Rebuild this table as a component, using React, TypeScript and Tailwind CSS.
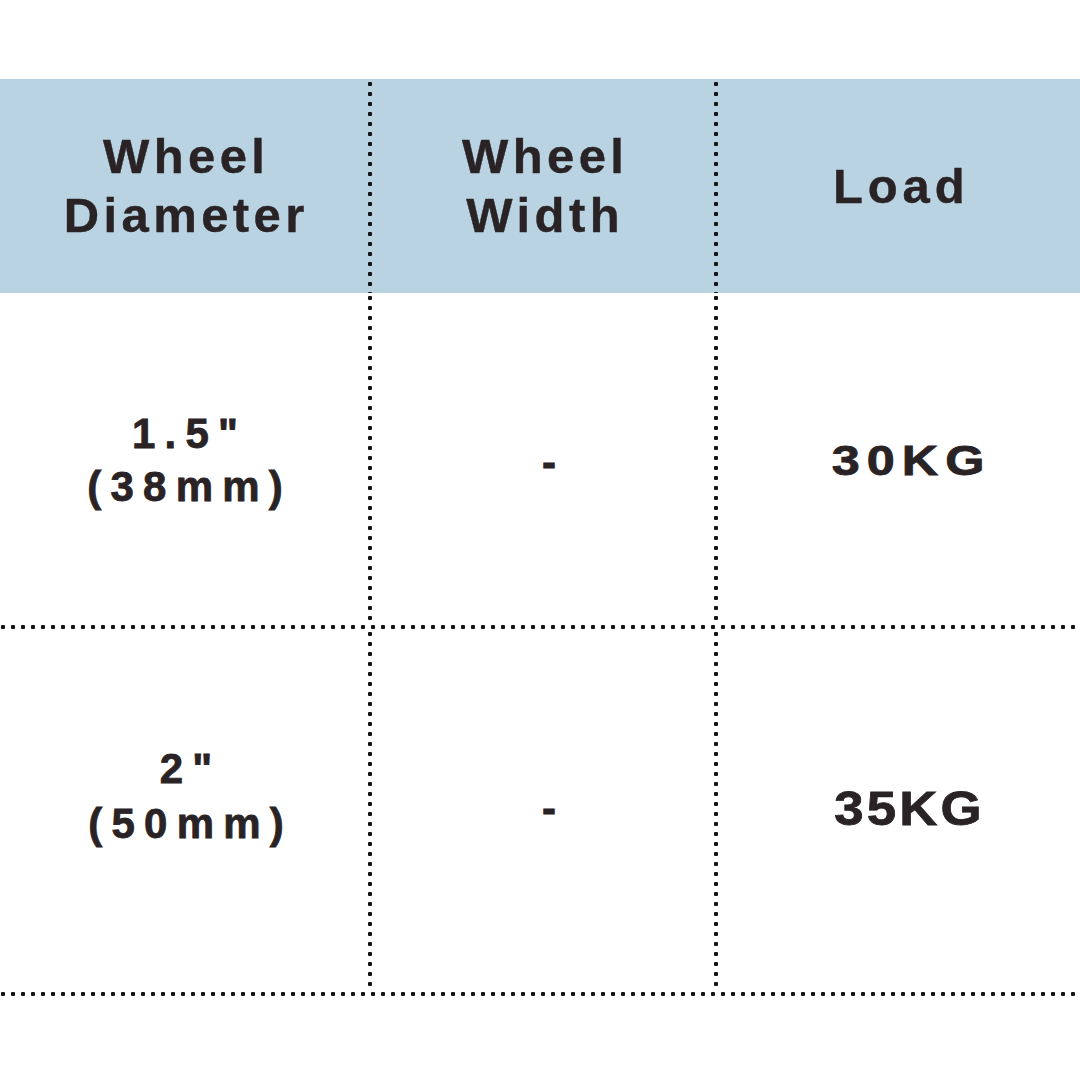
import React from 'react';

const font = { fontFamily: '"Liberation Sans", Arial, sans-serif' };

// dotted divider pieces
function VDots() {
  return <div className="w-[4px] shrink-0 self-stretch bg-[radial-gradient(circle,#141414_2px,transparent_2.5px)] bg-[length:4px_10px]" />;
}

function HDots() {
  return <div className="h-[4px] w-full bg-[radial-gradient(circle,#141414_2px,transparent_2.5px)] bg-[length:10px_4px] bg-[position:-2px_0]" />;
}

const cols = ['w-[368px]', 'w-[342px]', 'w-[362px]'];

function Row({ cells, className, textClass }: { cells: React.ReactNode[]; className: string; textClass: string }) {
  return (
    <div className={`flex ${className}`}>
      {cells.map((c, i) => (
        <React.Fragment key={i}>
          {i > 0 && <VDots />}
          <div className={`${cols[i]} flex items-center justify-center text-center ${textClass}`}>{c}</div>
        </React.Fragment>
      ))}
    </div>
  );
}

export default function App() {
  const head = 'text-[49px] font-bold leading-[59px] tracking-[0.09em] pl-[0.09em] text-[#2a2325] [-webkit-text-stroke:0.4px_#2a2325]';
  const body = 'text-[42px] font-bold tracking-[0.22em] pl-[0.22em] text-[#2a2325] [-webkit-text-stroke:0.8px_#2a2325]';

  return (
    <div className="w-[1080px] h-[1080px] bg-white pt-[79px]" style={font}>
      <Row
        className="h-[214px] bg-[#b9d3e2]"
        textClass={head}
        cells={[
          <div>Wheel<br />Diameter</div>,
          <div>Wheel<br />Width</div>,
          <div className="tracking-[0.1em]">Load</div>,
        ]}
      />
      <Row
        className="h-[332px]"
        textClass={body}
        cells={[
          <div className="leading-[53px] pt-[2px] ml-[2px]">1.5"<br />(38mm)</div>,
          <div className="pt-[6px] ml-[12px]">-</div>,
          <div className="inline-block scale-x-[1.2] tracking-[0.14em] pl-0 ml-[16px] pt-[2px]">30KG</div>,
        ]}
      />
      <HDots />
      <Row
        className="h-[363px]"
        textClass={body}
        cells={[
          <div className="leading-[55px] pb-[30px] ml-[4px]">2"<br />(50mm)</div>,
          <div className="pb-[4px] ml-[12px]">-</div>,
          <div className="inline-block text-[48px] scale-x-[1.1] tracking-[0.06em] pl-0 ml-[12px] pb-[4px]">35KG</div>,
        ]}
      />
      <HDots />
    </div>
  );
}
